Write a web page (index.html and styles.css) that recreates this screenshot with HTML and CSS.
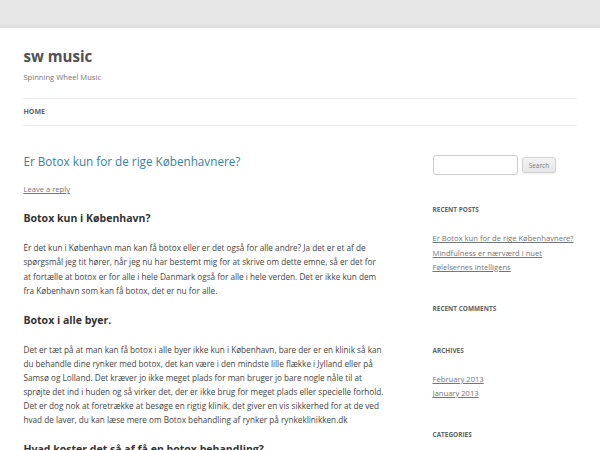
FILE: index.html
```
<!DOCTYPE html>
<html lang="da">
<head>
  <meta charset="UTF-8" />
  <meta name="viewport" content="width=device-width, initial-scale=1.0"/>
  <title>sw music | Spinning Wheel Music</title>
  <link rel="stylesheet" href="styles.css">
</head>
<body>
  <div class="site">
    <!-- Header -->
    <header class="site-header">
      <h1 class="site-title"><a href="#">sw music</a></h1>
      <h2 class="site-description">Spinning Wheel Music</h2>

      <nav class="main-navigation">
        <ul class="nav-menu">
          <li class="current-menu-item"><a href="#">Home</a></li>
        </ul>
      </nav>
    </header>

    <div class="main">
      <!-- Content -->
      <div class="site-content">
        <article class="post">
          <header class="entry-header">
            <h1 class="entry-title"><a href="#">Er Botox kun for de rige Københavnere?</a></h1>
            <div class="comments-link"><a href="#">Leave a reply</a></div>
          </header>

          <div class="entry-content">
            <h2>Botox kun i København?</h2>
            <p>Er det kun i København man kan få botox eller er det også for alle andre? Ja det er et af de spørgsmål jeg tit hører, når jeg nu har bestemt mig for at skrive om dette emne, så er det for at fortælle at botox er for alle i hele Danmark også for alle i hele verden. Det er ikke kun dem fra København som kan få botox, det er nu for alle.</p>
            <h2>Botox i alle byer.</h2>
            <p>Det er tæt på at man kan få botox i alle byer ikke kun i København, bare der er en klinik så kan du behandle dine rynker med botox, det kan være i den mindste lille flække i Jylland eller på Samsø og Lolland. Det kræver jo ikke meget plads for man bruger jo bare nogle nåle til at sprøjte det ind i huden og så virker det, der er ikke brug for meget plads eller specielle forhold. Det er dog nok at foretrække at besøge en rigtig klinik, det giver en vis sikkerhed for at de ved hvad de laver, du kan læse mere om Botox behandling af rynker på rynkeklinikken.dk</p>
            <h2>Hvad koster det så af få en botox behandling?</h2>
            <p>Prisen på en behandling afhænger af hvor mange områder man vil have behandlet.</p>
          </div>
        </article>
      </div>

      <!-- Sidebar -->
      <div class="widget-area">
        <div class="widget widget-search">
          <form class="search-form">
            <input type="text" class="search-field">
            <input type="submit" class="search-submit" value="Search">
          </form>
        </div>

        <div class="widget">
          <h3 class="widget-title">Recent Posts</h3>
          <ul>
            <li><a href="#">Er Botox kun for de rige Københavnere?</a></li>
            <li><a href="#">Mindfulness er nærværd i nuet</a></li>
            <li><a href="#">Følelsernes intelligens</a></li>
          </ul>
        </div>

        <div class="widget">
          <h3 class="widget-title">Recent Comments</h3>
          <ul></ul>
        </div>

        <div class="widget">
          <h3 class="widget-title">Archives</h3>
          <ul>
            <li><a href="#">February 2013</a></li>
            <li><a href="#">January 2013</a></li>
          </ul>
        </div>

        <div class="widget">
          <h3 class="widget-title">Categories</h3>
          <ul>
            <li><a href="#">Uncategorized</a></li>
          </ul>
        </div>
      </div>
    </div>
  </div>
</body>
</html>
```

FILE: styles.css
```
/* 1rem = 14px of the theme, shown at 600/1024 */
html {
  font-size: 8.203125px;
}

body {
  margin: 0;
  padding: 0;
  background-color: #e6e6e6;
  font-family: "Open Sans", "Liberation Sans", sans-serif;
  font-size: 1rem;
  line-height: 1.714285714;
  color: #444;
}

h1, h2, h3, p, ul {
  margin: 0;
  padding: 0;
}

ul {
  list-style: none;
}

a {
  color: #21759b;
}

.site {
  margin-top: 3.428571429rem;
  padding: 0 2.857142857rem;
  background-color: #fff;
  box-shadow: 0 2px 6px rgba(100, 100, 100, 0.3);
  min-height: 100vh;
}

/* Header */
.site-header {
  padding: 1.714285714rem 0;
}

.site-title {
  margin: 0.6rem 0 0.4rem;
  font-size: 1.84rem;
  line-height: 1.3;
  font-weight: bold;
}

.site-title a {
  color: #515151;
  text-decoration: none;
}

.site-description {
  font-size: 0.928571429rem;
  line-height: 1.846153846;
  font-weight: normal;
  color: #757575;
}

.main-navigation {
  margin-top: 1.714285714rem;
  border-top: 1px solid #ededed;
  border-bottom: 1px solid #ededed;
}

.nav-menu {
  display: flex;
  gap: 2.857142857rem;
}

.nav-menu li {
  font-size: 0.857142857rem;
}

.nav-menu a {
  display: block;
  line-height: 3.692307692;
  text-transform: uppercase;
  text-decoration: none;
  color: #6a6a6a;
}

.nav-menu .current-menu-item a {
  color: #636363;
  font-weight: bold;
}

/* Layout */
.main {
  display: flex;
  justify-content: space-between;
  align-items: flex-start;
  margin-top: 1.714285714rem;
}

.site-content {
  width: 65.104166667%;
}

.widget-area {
  width: 26.041666667%;
  padding-top: 1px;
}

/* Post */
.entry-header {
  margin-bottom: 1.714285714rem;
}

.entry-title {
  font-size: 1.428571429rem;
  line-height: 1.2;
  font-weight: normal;
}

.entry-title a {
  color: #3582a6;
  text-decoration: none;
}

.comments-link {
  margin-top: 1.714285714rem;
  font-size: 0.928571429rem;
  line-height: 1.846153846;
}

.comments-link a {
  color: #757575;
}

.entry-content h2 {
  margin: 1.714285714rem 0;
  font-size: 1.285714286rem;
  line-height: 1.6;
  font-weight: bold;
  color: #333;
}

.entry-content p {
  margin: 0 0 1.714285714rem;
  line-height: 1.714285714;
}

/* Sidebar */
.widget {
  margin-bottom: 3.428571429rem;
}

.search-form {
  display: flex;
  align-items: center;
  gap: 4px;
}

.search-field {
  width: 10.4rem;
  height: 2.44rem;
  box-sizing: border-box;
  padding: 0.428571429rem;
  border: 1px solid #ccc;
  border-radius: 3px;
  font-family: inherit;
  font-size: 0.928571429rem;
}

.search-submit {
  padding: 0.3rem 0.714285714rem;
  font-family: inherit;
  font-size: 0.785714286rem;
  line-height: 1.428571429;
  color: #7c7c7c;
  background-color: #e6e6e6;
  background-image: linear-gradient(#f4f4f4, #e6e6e6);
  border: 1px solid #d2d2d2;
  border-radius: 3px;
  box-shadow: 0 1px 2px rgba(64, 64, 64, 0.1);
}

.widget-title {
  margin-bottom: 1.714285714rem;
  font-size: 0.785714286rem;
  line-height: 2.181818182;
  font-weight: bold;
  text-transform: uppercase;
  color: #636363;
}

.widget li {
  font-size: 0.928571429rem;
  line-height: 1.846153846;
}

.widget a {
  color: #757575;
}
```
